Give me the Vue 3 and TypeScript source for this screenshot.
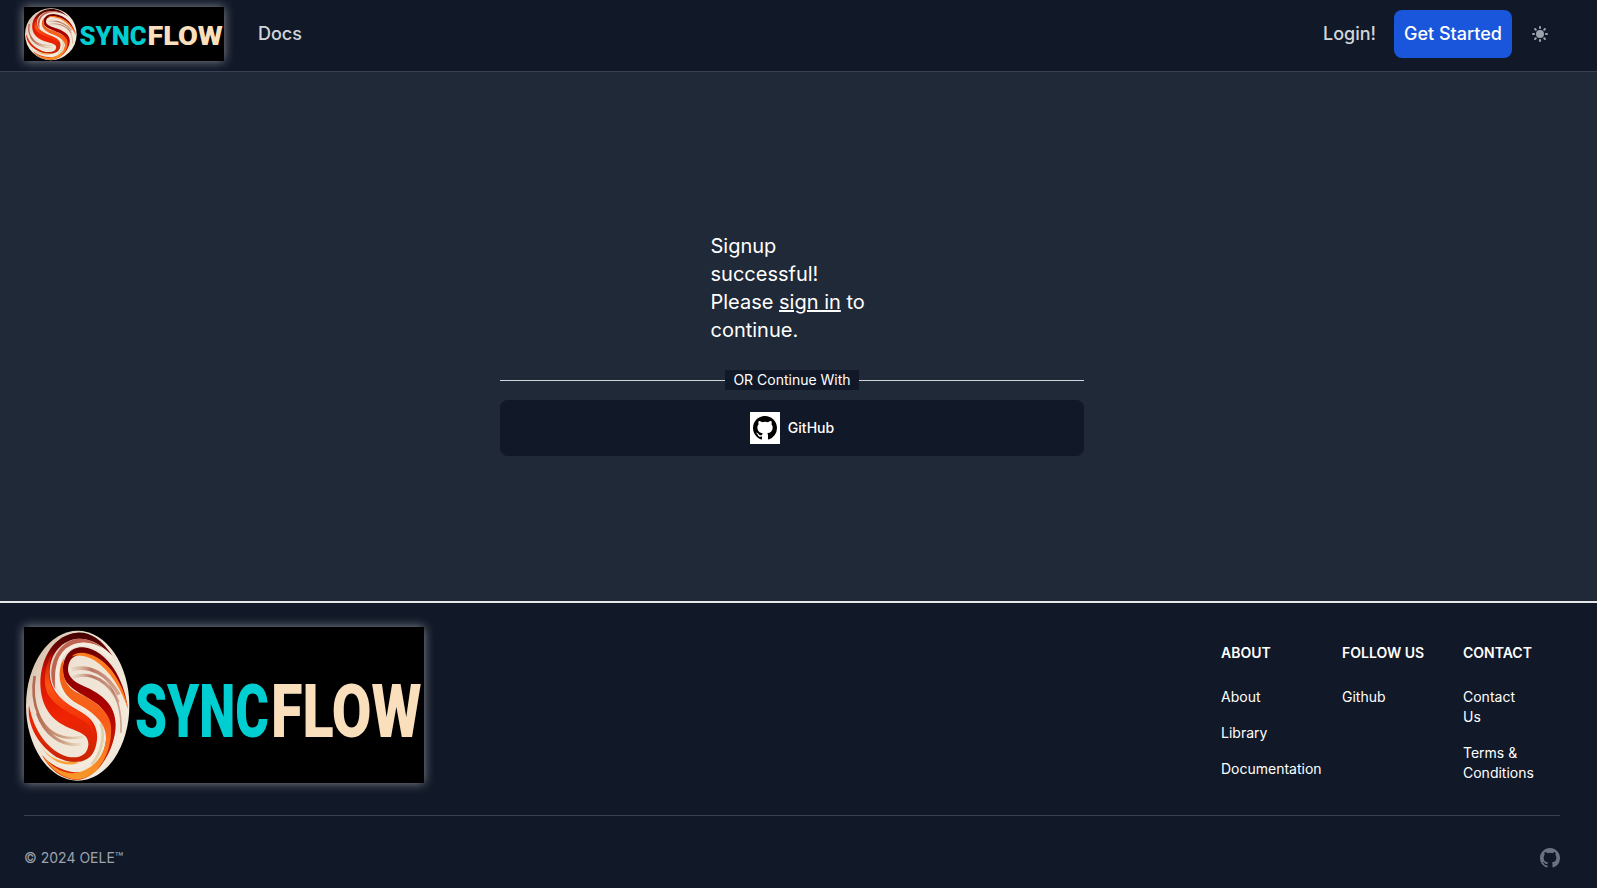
<script setup lang="ts">
import { defineComponent, h } from 'vue'

interface FooterColumn {
  title: string
  links: string[]
}

const columns: FooterColumn[] = [
  { title: 'About', links: ['About', 'Library', 'Documentation'] },
  { title: 'Follow us', links: ['Github'] },
  { title: 'Contact', links: ['Contact Us', 'Terms & Conditions'] },
]

const GithubMark = defineComponent({
  render: () =>
    h('svg', { viewBox: '0 0 16 16', fill: 'currentColor' }, [
      h('path', {
        'fill-rule': 'evenodd',
        d: 'M8 0C3.58 0 0 3.58 0 8c0 3.54 2.29 6.53 5.47 7.59.4.07.55-.17.55-.38 0-.19-.01-.82-.01-1.49-2.01.37-2.53-.49-2.69-.94-.09-.23-.48-.94-.82-1.13-.28-.15-.68-.52-.01-.53.63-.01 1.08.58 1.23.82.72 1.21 1.87.87 2.33.66.07-.52.28-.87.51-1.07-1.78-.2-3.64-.89-3.64-3.95 0-.87.31-1.59.82-2.15-.08-.2-.36-1.02.08-2.12 0 0 .67-.21 2.2.82a7.6 7.6 0 0 1 4 0c1.53-1.04 2.2-.82 2.2-.82.44 1.1.16 1.92.08 2.12.51.56.82 1.27.82 2.15 0 3.07-1.87 3.75-3.65 3.95.29.25.54.73.54 1.48 0 1.07-.01 1.93-.01 2.2 0 .21.15.46.55.38A8.01 8.01 0 0 0 16 8c0-4.42-3.58-8-8-8Z',
      }),
    ]),
})

// The wordmark is drawn once and stretched to each logo box.
const SyncflowLogo = defineComponent({
  render: () =>
    h('svg', { viewBox: '0 0 400 156', preserveAspectRatio: 'none', role: 'img', 'aria-label': 'SyncFlow' }, [
      h('use', { href: '#emblem', x: 0, y: 0, width: 106.67, height: 156 }),
      h('g', { 'font-family': 'Roboto, Inter, sans-serif', 'font-size': 75, 'font-weight': 900 }, [
        h('text', { x: 111, y: 110.3, fill: '#00ced1', textLength: 134, lengthAdjust: 'spacingAndGlyphs' }, 'SYNC'),
        h('text', { x: 247, y: 110.3, fill: '#fadfbd', textLength: 150.5, lengthAdjust: 'spacingAndGlyphs' }, 'FLOW'),
      ]),
    ]),
})
</script>

<template>
  <div class="page">
    <svg class="defs" width="0" height="0" aria-hidden="true">
      <defs>
        <linearGradient id="cream" x1="0" y1="0" x2="1" y2="1">
          <stop offset="0" stop-color="#c9ac91" />
          <stop offset=".35" stop-color="#eee3d5" />
          <stop offset=".8" stop-color="#f3eadb" />
          <stop offset="1" stop-color="#d9c7a8" />
        </linearGradient>
        <linearGradient id="red" x1="0" y1="0" x2="0" y2="1">
          <stop offset="0" stop-color="#3d0000" />
          <stop offset=".12" stop-color="#700505" />
          <stop offset=".3" stop-color="#d31203" />
          <stop offset=".65" stop-color="#f02403" />
          <stop offset="1" stop-color="#c92504" />
        </linearGradient>
        <linearGradient id="amber" x1="0" y1="0" x2="0" y2="1">
          <stop offset="0" stop-color="#f0600f" />
          <stop offset=".3" stop-color="#f4641a" />
          <stop offset=".5" stop-color="#fb5a18" />
          <stop offset="1" stop-color="#f79a28" />
        </linearGradient>
        <linearGradient id="flame" x1="0" y1="0" x2="0" y2="1">
          <stop offset="0" stop-color="#c01502" />
          <stop offset=".4" stop-color="#fb5514" />
          <stop offset="1" stop-color="#f02403" />
        </linearGradient>
        <linearGradient id="maroon" x1="0" y1="0" x2="0" y2="1">
          <stop offset="0" stop-color="#6e0000" />
          <stop offset=".4" stop-color="#a80000" />
          <stop offset="1" stop-color="#dc2904" />
        </linearGradient>
        <linearGradient id="wispTop" x1="0" y1="0" x2="1" y2="0">
          <stop offset="0" stop-color="#d6bd9c" stop-opacity=".3" />
          <stop offset=".4" stop-color="#bb7563" />
          <stop offset="1" stop-color="#d3a792" />
        </linearGradient>
        <linearGradient id="wispLow" x1="0" y1="0" x2="1" y2="0">
          <stop offset="0" stop-color="#b66852" />
          <stop offset=".6" stop-color="#cda384" />
          <stop offset="1" stop-color="#dfcaa4" stop-opacity=".4" />
        </linearGradient>
        <clipPath id="disc"><ellipse cx="203" cy="287" rx="155" ry="225" /></clipPath>
        <symbol id="emblem" viewBox="42 51 320 468" preserveAspectRatio="none">
          <g clip-path="url(#disc)" fill="none">
            <rect x="40" y="50" width="330" height="480" fill="url(#cream)" />
            <path fill="url(#red)" d="M309 140C272 82 235 65 201 68C133 74 92 142 91 220C92 290 125 332 176 353C216 369 237 376 235 405C231 440 202 446 172 440C118 425 71 365 57 286C49 350 91 411 139 441C184 465 243 464 257 410C269 366 257 332 214 307C165 280 120 250 119 187C120 127 158 91 203 86C244 84 281 109 309 140Z" />
            <path fill="#c16351" d="M278 115C233 75 184 79 154 112C119 150 117 208 136 238C130 180 151 120 193 103C222 93 253 99 278 115Z" />
            <path fill="url(#flame)" d="M128 128C104 165 96 225 117 258C145 299 194 314 223 334C244 348 248 361 249 372C250 338 235 320 212 306C173 284 126 256 119 208C115 175 120 146 128 128Z" />
            <path stroke="#f4ecdf" stroke-width="11" d="M305 143C266 104 212 88 171 120C139 147 134 207 150 236C170 274 236 288 261 330C281 365 271 413 246 446C220 474 179 473 146 460" />
            <path stroke="#ddd0ad" stroke-width="8" d="M272 342C286 376 275 430 245 463" />
            <path fill="url(#maroon)" d="M354 297C344 211 294 120 220 112C176 109 153 150 160 194C168 238 230 255 266 286C302 317 294 375 281 424C260 487 209 496 163 480C133 470 111 453 96 435C116 475 156 510 203 510C272 502 317 407 317 345C317 284 274 251 225 230C189 215 173 198 174 175C176 147 191 135 215 134C274 138 330 194 354 297Z" />
            <path fill="url(#amber)" d="M162 146C153 190 164 228 198 246C248 268 298 300 303 348C306 400 290 450 255 485C232 504 206 510 190 508C150 500 115 470 96 435C120 465 150 488 190 490C245 484 285 440 288 385C289 340 250 307 205 283C165 262 149 228 149 195C150 170 154 158 162 146Z" />
            <path fill="#ff7b1d" d="M184 140C207 114 267 132 304 180C331 215 348 257 354 297C334 239 301 182 253 151C224 135 198 134 184 140Z" />
            <path fill="#f9a238" d="M86 398C108 440 150 463 211 454C180 477 119 460 86 398Z" />
            <path stroke="url(#wispTop)" stroke-width="11" d="M185 178C242 163 292 193 327 254" />
            <path stroke="url(#wispTop)" stroke-width="9" d="M188 202C245 180 300 218 325 276" />
            <path stroke="url(#wispTop)" stroke-width="5" d="M288 216C320 247 336 305 333 368" />
            <path stroke="url(#wispLow)" stroke-width="8" d="M74 198C60 280 91 363 157 380C181 386 200 385 220 380" />
            <path stroke="url(#wispLow)" stroke-width="9" d="M82 309C103 374 157 411 212 403" />
          </g>
        </symbol>
      </defs>
    </svg>

    <header class="topbar">
      <div class="logo logo-header"><SyncflowLogo class="logo-art" /></div>
      <a class="nav-link docs">Docs</a>
      <div class="actions">
        <a class="nav-link">Login!</a>
        <a class="started">Get Started</a>
        <svg class="sun" viewBox="0 0 20 20" fill="currentColor">
          <path fill-rule="evenodd" clip-rule="evenodd" d="M10 2a1 1 0 011 1v1a1 1 0 11-2 0V3a1 1 0 011-1zm4 8a4 4 0 11-8 0 4 4 0 018 0zm-.464 4.95l.707.707a1 1 0 001.414-1.414l-.707-.707a1 1 0 00-1.414 1.414zm2.12-10.607a1 1 0 010 1.414l-.706.707a1 1 0 11-1.414-1.414l.707-.707a1 1 0 011.414 0zM17 11a1 1 0 100-2h-1a1 1 0 100 2h1zm-7 4a1 1 0 011 1v1a1 1 0 11-2 0v-1a1 1 0 011-1zM5.05 6.464A1 1 0 106.465 5.05l-.708-.707a1 1 0 00-1.414 1.414l.707.707zm1.414 8.486l-.707.707a1 1 0 01-1.414-1.414l.707-.707a1 1 0 011.414 1.414zM4 11a1 1 0 100-2H3a1 1 0 000 2h1z" />
        </svg>
      </div>
    </header>

    <main class="content">
      <section class="panel">
        <p class="message">Signup successful! Please <a class="signin">sign in</a> to continue.</p>
        <div class="divider"><span>OR Continue With</span></div>
        <button class="github-button" type="button">
          <span class="tile"><GithubMark class="tile-mark" /></span>
          GitHub
        </button>
      </section>
    </main>

    <footer class="footer">
      <div class="footer-main">
        <div class="logo logo-footer"><SyncflowLogo class="logo-art" /></div>
        <nav class="columns">
          <div v-for="column in columns" :key="column.title">
            <h2>{{ column.title }}</h2>
            <ul>
              <li v-for="link in column.links" :key="link"><a>{{ link }}</a></li>
            </ul>
          </div>
        </nav>
      </div>
      <div class="footer-bottom">
        <span>© 2024 OELE™</span>
        <GithubMark class="footer-mark" />
      </div>
    </footer>
  </div>
</template>

<style>
body {
  margin: 0;
  background: #111827;
}
</style>

<style scoped>
.page {
  display: flex;
  flex-direction: column;
  height: 888px;
  overflow: hidden;
  background: #1f2937;
  color: #fff;
  font-family: Inter, "Liberation Sans", sans-serif;
  font-size: 14px;
  line-height: 20px;
}
.page * {
  box-sizing: border-box;
}
.defs {
  position: absolute;
}
.topbar {
  display: flex;
  flex: none;
  align-items: center;
  height: 72px;
  padding: 0 47px 3px 24px;
  background: #111827;
  border-bottom: 1px solid #374151;
}
.logo {
  flex: none;
  background: #000;
  box-shadow: 0 0 10px rgba(255, 255, 255, 0.5);
}
.logo-art {
  display: block;
  width: 100%;
  height: 100%;
}
.logo-header {
  width: 200px;
  height: 54px;
}
.logo-footer {
  width: 400px;
  height: 156px;
}
.nav-link {
  color: #d1d5db;
  font-size: 18px;
  font-weight: 500;
  line-height: 28px;
}
.docs {
  margin-left: 34px;
}
.actions {
  display: flex;
  align-items: center;
  margin-left: auto;
}
.started {
  display: flex;
  align-items: center;
  justify-content: center;
  width: 118px;
  height: 48px;
  margin: 0 18px;
  border-radius: 8px;
  background: #1a56db;
  font-size: 18px;
  font-weight: 500;
  line-height: 28px;
  white-space: nowrap;
}
.sun {
  width: 20px;
  height: 20px;
  color: #9ca3af;
}
.content {
  display: flex;
  flex: 1;
  justify-content: center;
  padding: 160px 13px 0 0;
}
.panel {
  width: 584px;
}
.message {
  width: 163px;
  margin: 0 auto;
  font-size: 20px;
  line-height: 28px;
}
.signin {
  text-decoration: underline;
}
.divider {
  display: flex;
  align-items: center;
  margin: 26px 0 10px;
}
.divider::before,
.divider::after {
  flex: 1;
  height: 1px;
  background: #d1d5db;
  content: "";
}
.divider span {
  padding: 0 8px;
  background: #111827;
}
.github-button {
  display: flex;
  align-items: center;
  justify-content: center;
  gap: 8px;
  width: 100%;
  height: 56px;
  padding: 0;
  border: 0;
  border-radius: 8px;
  background: #111827;
  color: #fff;
  font: 500 14px/20px Inter, "Liberation Sans", sans-serif;
}
.tile {
  display: grid;
  place-items: center;
  width: 30px;
  height: 32px;
  background: #fff;
  color: #000;
}
.tile-mark {
  width: 24px;
  height: 24px;
}
.footer {
  flex: none;
  height: 287px;
  padding: 24px 37px 0 24px;
  background: #111827;
  border-top: 2px solid #e5e7eb;
}
.footer-main {
  display: flex;
  justify-content: space-between;
  height: 189px;
  border-bottom: 1px solid #374151;
}
.columns {
  display: grid;
  grid-template-columns: 89px 89px 71px;
  gap: 32px;
  padding: 16px 26px 0 0;
}
.columns h2 {
  margin: 0 0 24px;
  font-size: 14px;
  font-weight: 600;
  line-height: 20px;
  text-transform: uppercase;
  white-space: nowrap;
}
.columns ul {
  margin: 0;
  padding: 0;
  list-style: none;
}
.columns li {
  margin-bottom: 16px;
}
.footer-bottom {
  display: flex;
  align-items: center;
  justify-content: space-between;
  margin-top: 32px;
  color: #9ca3af;
}
.footer-mark {
  width: 20px;
  height: 20px;
  color: #6b7280;
}
</style>
